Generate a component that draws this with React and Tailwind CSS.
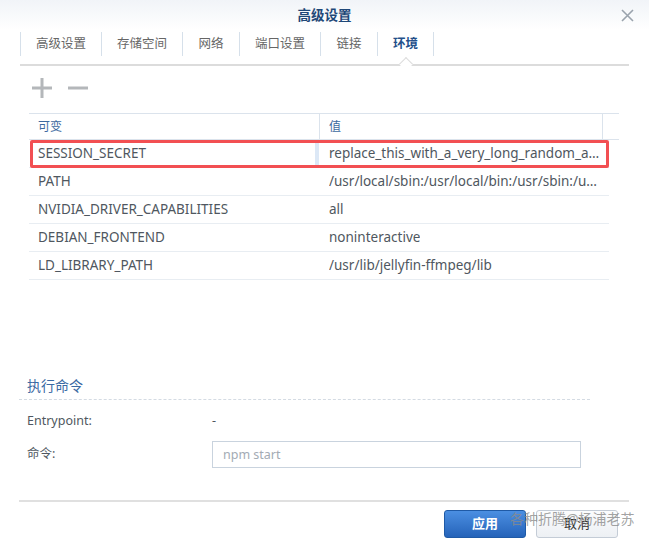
import { useState } from 'react';

const tabs = ['高级设置', '存储空间', '网络', '端口设置', '链接', '环境'];

const envRows = [
  { name: 'SESSION_SECRET', value: 'replace_this_with_a_very_long_random_and_secure_string', marked: true },
  { name: 'PATH', value: '/usr/local/sbin:/usr/local/bin:/usr/sbin:/usr/bin:/sbin:/bin' },
  { name: 'NVIDIA_DRIVER_CAPABILITIES', value: 'all' },
  { name: 'DEBIAN_FRONTEND', value: 'noninteractive' },
  { name: 'LD_LIBRARY_PATH', value: '/usr/lib/jellyfin-ffmpeg/lib' },
];

const font = "font-['Noto_Sans','Noto_Sans_CJK_SC',sans-serif]";

const TabBar = ({ active }) => {
  return (
    <div className="relative mx-[20px] h-[34px] border-b-2 border-[#dcdcdc]">
      <div className="flex h-[24px] mt-[2px]">
        {tabs.map((t) => (
          <div
            key={t}
            className={`relative flex items-center justify-center border-l border-[#d6e0ea] last:border-r text-[12.5px] ${
              t.length > 2 ? 'w-[81px]' : 'w-[57px]'
            } ${t === active ? 'font-bold text-[#24508a]' : 'text-[#666]'}`}
          >
            {t}
            {t === active && (
              <span className="absolute left-1/2 -translate-x-1/2 top-[27px] w-[10px] h-[10px] rotate-45 bg-white border-l border-t border-[#dcdcdc]" />
            )}
          </div>
        ))}
      </div>
    </div>
  );
};

const EnvTable = ({ rows }) => {
  return (
    <div className="ml-[29px] w-[590px]">
      <div className="grid grid-cols-[290px_284px_16px] h-[27px] border-t border-b border-[#dbe3ec] text-[12px] text-[#3d6aa0]">
        <div className="flex items-center pl-[9px]">可变</div>
        <div className="flex items-center pl-[9px] border-l border-r border-[#dbe3ec]">值</div>
        <div />
      </div>
      {rows.map((r) => (
        <div
          key={r.name}
          className="relative grid grid-cols-[290px_290px] w-[580px] h-[28px] border-b border-[#e8edf2] text-[13.5px] text-[#4f5760]"
        >
          <div className="flex items-center pl-[9px]">{r.name}</div>
          <div className={`flex items-center pl-[10px] pr-[6px] min-w-0 ${r.marked ? 'border-l-4 border-[#dce8f6] -ml-[4px]' : ''}`}>
            <span className="truncate">{r.value}</span>
          </div>
          {r.marked && (
            <div className="absolute left-[1px] top-0 w-[579px] h-[28px] border-[3px] border-[#f24f52] rounded-[2px] pointer-events-none" />
          )}
        </div>
      ))}
    </div>
  );
};

export default function App() {
  const [cmd, setCmd] = useState('');

  return (
    <div className={`relative w-[649px] h-[546px] bg-white overflow-hidden ${font}`}>
      {/* title bar */}
      <div className="grid grid-cols-[1fr_auto_1fr] items-center h-[30px] bg-gradient-to-b from-[#f1f4f8] to-white">
        <div />
        <div className="text-[13.5px] font-bold text-[#1f4878]">高级设置</div>
        <div className="flex justify-end pr-[15px]">
          <svg width="13" height="13" viewBox="0 0 13 13" className="text-[#9aa3ad]">
            <path d="M1 1 L12 12 M12 1 L1 12" stroke="currentColor" strokeWidth="1.6" fill="none" />
          </svg>
        </div>
      </div>

      <TabBar active="环境" />

      {/* toolbar */}
      <div className="flex items-center gap-[16px] h-[47px] pl-[32px] pb-[3px]">
        <svg width="20" height="20" viewBox="0 0 20 20">
          <path d="M0 10 H20 M10 0 V20" stroke="#b4b7ba" strokeWidth="3" />
        </svg>
        <svg width="20" height="20" viewBox="0 0 20 20">
          <path d="M0 10 H20" stroke="#b4b7ba" strokeWidth="3" />
        </svg>
      </div>

      <EnvTable rows={envRows} />

      {/* command section */}
      <div className="mt-[95px] ml-[19px] w-[571px]">
        <div className="pl-[8px] pb-[3px] text-[14px] text-[#3c6aa3] border-b border-dashed border-[#d4dbe3]">
          执行命令
        </div>
        <div className="flex items-center h-[22px] mt-[10px] text-[12.5px] text-[#4f5760]">
          <div className="w-[193px] pl-[8px]">Entrypoint:</div>
          <div>-</div>
        </div>
        <div className="flex items-center mt-[9px] text-[12.5px] text-[#4f5760]">
          <div className="w-[193px] pl-[8px]">命令:</div>
          <input
            value={cmd}
            onChange={(e) => setCmd(e.target.value)}
            placeholder="npm start"
            className="w-[369px] h-[27px] px-[10px] border border-[#c9d3de] text-[12.5px] text-[#4f5760] placeholder:text-[#a3abb4] outline-none"
          />
        </div>
      </div>

      {/* footer */}
      <div className="mt-[32px] ml-[19px] w-[610px] h-[2px] bg-[#e0e0e0]" />
      <div className="flex justify-end gap-[10px] pr-[31px] mt-[8px]">
        <button className="w-[82px] h-[28px] rounded-[3px] border border-[#1f5aa6] bg-gradient-to-b from-[#4b8fe2] to-[#2563b9] text-[13px] font-bold text-white">
          应用
        </button>
        <button className="w-[82px] h-[28px] rounded-[3px] border border-[#c4ccd6] bg-gradient-to-b from-[#fbfcfd] to-[#edf0f4] text-[13px] text-[#333]">
          取消
        </button>
      </div>

      {/* watermark */}
      <div className="absolute left-[510px] top-[508px] text-[14px] text-[#8a8a8a]/80 whitespace-nowrap">
        各种折腾@杨浦老苏
      </div>
    </div>
  );
}
